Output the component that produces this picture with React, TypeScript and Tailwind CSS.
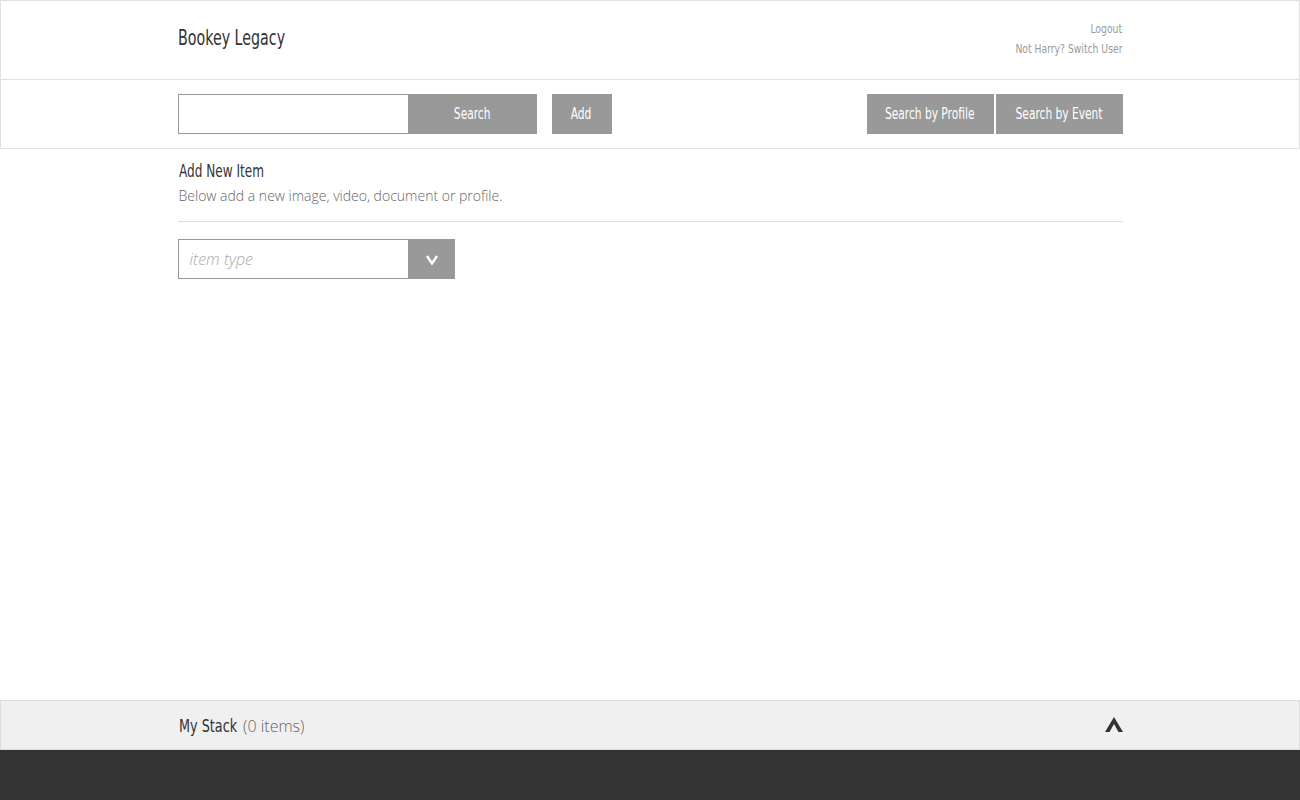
const condensed = "font-['DejaVu_Sans_Condensed',sans-serif]";
const body = "font-['Open_Sans',sans-serif]";

// narrow display face: DejaVu Condensed squeezed a little further
const Narrow = ({
  children,
  className = '',
  squeeze = 'scale-x-[0.79]',
}: {
  children: React.ReactNode;
  className?: string;
  squeeze?: string;
}) => <span className={`inline-block whitespace-nowrap ${squeeze} ${condensed} ${className}`}>{children}</span>;

const GrayButton = ({ label, className = '' }: { label: string; className?: string }) => (
  <button className={`flex h-10 items-center justify-center bg-[#999999] text-[15px] text-white ${className}`}>
    <Narrow>{label}</Narrow>
  </button>
);

const App = () => {
  return (
    <div className="flex h-screen flex-col bg-white">
      <header className="border border-[#e0e0e0]">
        <div className="border-b border-[#e0e0e0]">
          <div className="mx-auto flex h-[78px] w-[945px] items-center justify-between">
            <h1 className="pb-[6px] text-[22px] text-[#333333]">
              <Narrow className="origin-left" squeeze="scale-x-[0.72]">
                Bookey Legacy
              </Narrow>
            </h1>
            <div className="flex flex-col items-end pb-[3px] text-[13px] leading-[20px] text-[#999999]">
              <Narrow className="origin-right">Logout</Narrow>
              <Narrow className="origin-right">Not Harry? Switch User</Narrow>
            </div>
          </div>
        </div>
        <div className="mx-auto flex h-[68px] w-[945px] items-center">
          <div className="flex">
            <input className="h-10 w-[231px] border border-[#999999] bg-white outline-none" />
            <GrayButton label="Search" className="w-[128px]" />
          </div>
          <GrayButton label="Add" className="ml-[15px] w-[60px]" />
          <div className="ml-auto flex gap-[2px]">
            <GrayButton label="Search by Profile" className="w-[127px]" />
            <GrayButton label="Search by Event" className="w-[127px]" />
          </div>
        </div>
      </header>

      <main className="mx-auto w-[945px] flex-1 pt-[11px]">
        <h2 className="pl-[1px] text-[17px] leading-[22px] text-[#333333]">
          <Narrow className="origin-left">Add New Item</Narrow>
        </h2>
        <p className={`mt-[3px] pl-[1px] text-[14px] font-light text-[#666666] ${body}`}>
          Below add a new image, video, document or profile.
        </p>
        <hr className="mt-[15px] border-[#dddddd]" />
        <div className="mt-[17px] flex h-10 w-[277px]">
          <div className={`flex flex-1 items-center border border-[#999999] pl-[11px] text-[16px] font-light italic text-[#aaaaaa] ${body}`}>
            item type
          </div>
          <div className="flex w-[46px] items-center justify-center bg-[#999999]">
            <svg width="12" height="10" viewBox="0 0 12 10" className="mt-[2px]">
              <path d="M1 1 L6 8.5 L11 1" fill="none" stroke="white" strokeWidth="2.4" />
            </svg>
          </div>
        </div>
      </main>

      <footer>
        <div className="border border-[#dddddd] bg-[#f0f0f0]">
          <div className="mx-auto flex h-12 w-[945px] items-center">
            <span className="pl-[1px] text-[18px] text-[#333333]">
              <Narrow className="origin-left">My Stack</Narrow>
            </span>
            <span className={`-ml-[9px] mt-[2px] text-[16px] font-light text-[#666666] ${body}`}>(0 items)</span>
            <svg width="18" height="15" viewBox="0 0 18 15" className="mb-[2px] ml-auto">
              <polygon points="9,0 18,15 13.5,15 9,7 4.5,15 0,15" fill="#333333" />
            </svg>
          </div>
        </div>
        <div className="h-[50px] bg-[#333333]" />
      </footer>
    </div>
  );
};

export default App;
